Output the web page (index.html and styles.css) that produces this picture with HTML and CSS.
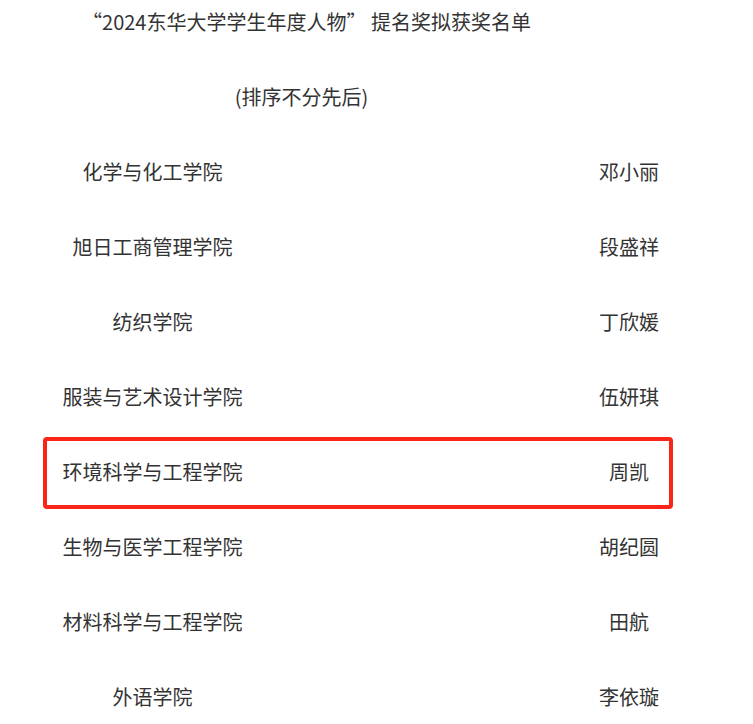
FILE: index.html
```html
<!DOCTYPE html>
<html lang="zh-CN">
<head>
<meta charset="utf-8">
<title>2024东华大学学生年度人物提名奖拟获奖名单</title>
<link rel="stylesheet" href="styles.css">
</head>
<body>
<main class="page">
  <h1 class="title">“2024东华大学学生年度人物” 提名奖拟获奖名单</h1>
  <p class="subtitle">(排序不分先后)</p>
  <ul class="list">
    <li class="row"><span class="college">化学与化工学院</span><span class="name">邓小丽</span></li>
    <li class="row"><span class="college">旭日工商管理学院</span><span class="name">段盛祥</span></li>
    <li class="row"><span class="college">纺织学院</span><span class="name">丁欣媛</span></li>
    <li class="row"><span class="college">服装与艺术设计学院</span><span class="name">伍妍琪</span></li>
    <li class="row row-marked"><span class="college">环境科学与工程学院</span><span class="name">周凯</span></li>
    <li class="row"><span class="college">生物与医学工程学院</span><span class="name">胡纪圆</span></li>
    <li class="row"><span class="college">材料科学与工程学院</span><span class="name">田航</span></li>
    <li class="row"><span class="college">外语学院</span><span class="name">李依璇</span></li>
  </ul>
</main>
</body>
</html>
```

FILE: styles.css
```css
html, body {
  margin: 0;
  padding: 0;
  background: #ffffff;
}

body {
  font-family: "Noto Sans CJK SC", "Noto Sans", sans-serif;
  font-size: 20px;
  color: #333333;
  overflow: hidden;
}

.page {
  width: 753px;
}

.title {
  width: 613px;
  margin: 0;
  padding: 7px 0 22px;
  font-size: 20px;
  font-weight: normal;
  line-height: 30px;
  text-align: center;
  white-space: pre;
}

.subtitle {
  width: 603px;
  margin: 0;
  height: 75px;
  line-height: 75px;
  text-align: center;
}

.list {
  list-style: none;
  margin: 0;
  padding: 0;
}

.row {
  display: grid;
  grid-template-columns: 305px 254px 140px;
  height: 75px;
  align-items: center;
  position: relative;
}

.college {
  grid-column: 1;
  text-align: center;
  line-height: 30px;
}

.name {
  grid-column: 3;
  text-align: center;
  line-height: 30px;
}

.row-marked::after {
  content: "";
  position: absolute;
  left: 43px;
  width: 622px;
  top: 3px;
  height: 64px;
  border: 4px solid #fa2418;
  border-radius: 4px;
}
```
